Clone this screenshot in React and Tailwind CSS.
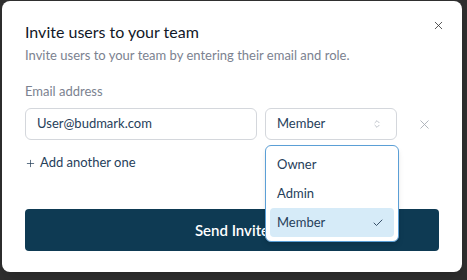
import { X, ChevronsUpDown, Check, Plus } from 'lucide-react'

const roles = ['Owner', 'Admin', 'Member']

export default function App() {
  return (
    <div className="h-[280px] w-[467px] overflow-hidden bg-[#2f2f2f] pl-[2px] pt-[1px] font-['Lato','Noto_Sans',sans-serif]">
      <div className="relative w-[460px] h-[271px] rounded-lg bg-white px-[23px] pt-[17px] shadow-lg">
        <button className="absolute right-[17px] top-[18px] text-[#333]">
          <X className="h-[13px] w-[13px]" strokeWidth={1.5} />
        </button>

        <h2 className="text-[16px] leading-[28px] text-[#111827]">Invite users to your team</h2>
        <p className="mt-[-1px] text-[13px] leading-[20px] text-[#7b8290]">
          Invite users to your team by entering their email and role.
        </p>

        <div className="mt-[16px] text-[13px] leading-[20px] text-[#7b8290]">Email address</div>

        <div className="mt-[7px] flex items-center">
          <div className="flex h-[32px] w-[232px] items-center rounded-md border border-[#d4d7dc] px-[11px] text-[13px] text-[#26405a]">
            User@budmark.com
          </div>
          <div className="relative ml-[8px]">
            <div className="flex h-[32px] w-[132px] items-center justify-between rounded-md border border-[#d4d7dc] pl-[11px] pr-[14px] text-[13px] text-[#26405a]">
              <span>Member</span>
              <ChevronsUpDown className="h-[10px] w-[10px] text-[#9aa1ab]" strokeWidth={1.5} />
            </div>
            <div className="absolute left-0 top-[37px] z-10 w-[134px] rounded-md border border-[#5b9fd6] bg-white p-[4px] shadow-md">
              {roles.map((r) => (
                <div
                  key={r}
                  className={
                    r === 'Member'
                      ? 'flex h-[29px] items-center justify-between rounded-[4px] bg-[#d6ebf8] pl-[7px] pr-[10px] text-[13px] text-[#26405a]'
                      : 'flex h-[29px] items-center justify-between pl-[7px] pr-[10px] text-[13px] text-[#26405a]'
                  }
                >
                  <span>{r}</span>
                  {r === 'Member' && <Check className="h-[12px] w-[12px] text-[#26405a]" strokeWidth={1.8} />}
                </div>
              ))}
            </div>
          </div>
          <X className="ml-[20px] h-[15px] w-[15px] text-[#a7adb5]" strokeWidth={1.4} />
        </div>

        <div className="mt-[13px] flex h-[20px] items-center text-[13px] text-[#26405a]">
          <Plus className="h-[11px] w-[11px]" strokeWidth={1.6} />
          <span className="ml-[4px]">Add another one</span>
        </div>

        <button className="mt-[36px] flex h-[42px] w-full items-center justify-center rounded-[4px] bg-[#0e3a53] text-[15px] font-semibold text-white">
          Send Invite
        </button>
      </div>
    </div>
  )
}
